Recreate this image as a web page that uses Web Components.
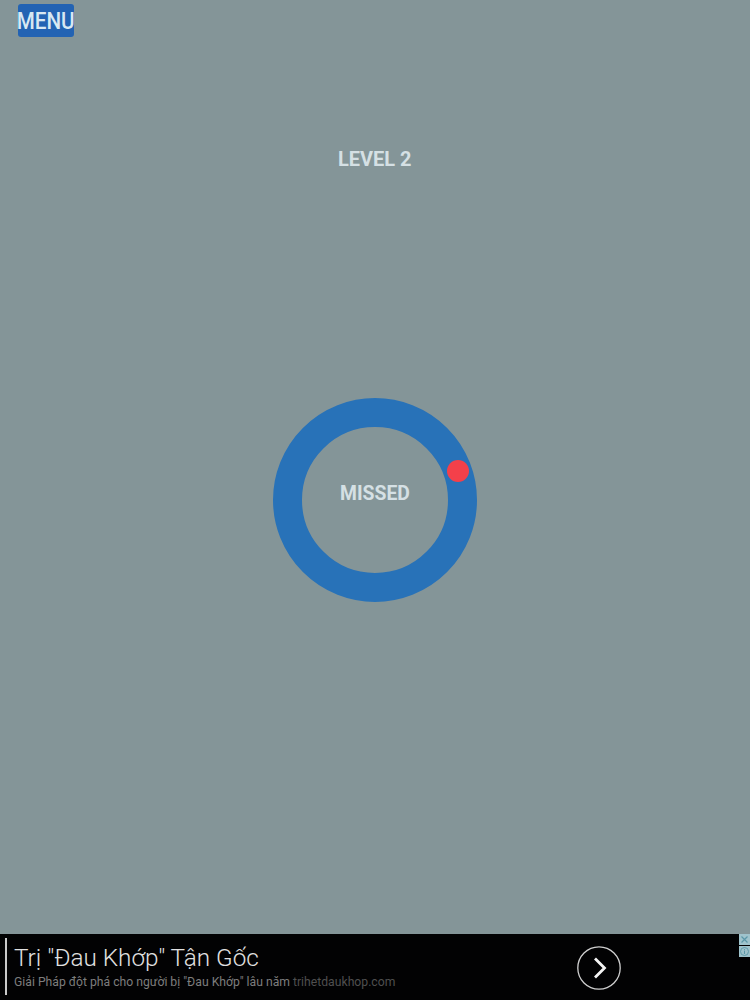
<!DOCTYPE html>
<html>
<head>
<meta charset="utf-8">
<style>
    html, body{ margin:0; padding:0; height:1000px; overflow:hidden; background:#849598; }
    body{ display:flex; flex-direction:column; font-family:Roboto, sans-serif; }
</style>
</head>
<body>
<game-screen level="LEVEL 2" status="MISSED"></game-screen>
<ad-banner
    headline='Trị "Đau Khớp" Tận Gốc'
    sub='Giải Pháp đột phá cho người bị "Đau Khớp" lâu năm'
    site="trihetdaukhop.com"></ad-banner>

<script>
class MenuButton extends HTMLElement{
    constructor(){
        super();
        this.attachShadow({mode:'open'}).innerHTML = `
        <style>
            :host{
                display:flex;
                width:56px;
                height:33px;
                align-items:center;
                justify-content:center;
                background:#2363b3;
                border-radius:3px;
                color:#d8e8f2;
                font:500 24px Roboto, sans-serif;
            }
            span{ display:inline-block; transform:scaleX(.86); }
        </style>
        <span><slot></slot></span>`;
    }
}
customElements.define('menu-button', MenuButton);

class TargetRing extends HTMLElement{
    constructor(){
        super();
        this.attachShadow({mode:'open'}).innerHTML = `
        <style>
            :host{
                display:flex;
                position:relative;
                box-sizing:border-box;
                width:204px;
                height:204px;
                border:29px solid #2872b8;
                border-radius:50%;
                align-items:center;
                justify-content:center;
                color:#d5e0e4;
                font:bold 21px Roboto, sans-serif;
            }
            #ball{
                position:absolute;
                left:145px;
                top:33px;
                width:22px;
                height:22px;
                border-radius:50%;
                background:#f4404a;
            }
            #label{ display:inline-block; margin-top:-15px; transform:scaleX(.92); }
        </style>
        <span id="label"><slot></slot></span>
        <div id="ball"></div>`;
    }
}
customElements.define('target-ring', TargetRing);

class GameScreen extends HTMLElement{
    constructor(){
        super();
        this.attachShadow({mode:'open'}).innerHTML = `
        <style>
            :host{
                display:flex;
                flex-direction:column;
                height:934px;
                box-sizing:border-box;
                padding-top:4px;
                background:#849598;
            }
            menu-button{ margin-left:18px; }
            #level{
                align-self:center;
                margin-top:110px;
                height:24px;
                color:#d5e0e4;
                font:bold 21px/24px Roboto, sans-serif;
                transform:scaleX(.95);
            }
            target-ring{ align-self:center; margin-top:227px; }
        </style>
        <menu-button>MENU</menu-button>
        <div id="level"></div>
        <target-ring></target-ring>`;
    }
    connectedCallback(){
        this.shadowRoot.getElementById('level').textContent = this.getAttribute('level');
        this.shadowRoot.querySelector('target-ring').textContent = this.getAttribute('status');
    }
}
customElements.define('game-screen', GameScreen);

class AdBanner extends HTMLElement{
    constructor(){
        super();
        this.attachShadow({mode:'open'}).innerHTML = `
        <style>
            :host{
                display:flex;
                position:relative;
                height:66px;
                box-sizing:border-box;
                padding:4px 0 5px 5px;
                background:#020203;
                font-family:Roboto, sans-serif;
            }
            #bar{ width:2px; background:#c9c9c9; }
            #copy{
                width:563px;
                margin-left:7px;
                display:flex;
                flex-direction:column;
            }
            #headline{
                font-size:24.3px;
                font-weight:300;
                line-height:32px;
                margin-top:4px;
                color:#e0e0e0;
                white-space:nowrap;
            }
            #sub{
                font-size:12.2px;
                line-height:14px;
                margin-top:1px;
                color:#7d7d7d;
                white-space:nowrap;
            }
            #site{ color:#4f4f4f; }
            #go{ width:44px; height:44px; margin-top:8px; }
            #adchoices{
                position:absolute;
                top:0;
                right:0;
                display:flex;
                flex-direction:column;
                gap:1px;
            }
            #adchoices svg{ display:block; width:11px; height:11px; background:#9fc3cc; }
        </style>
        <div id="bar"></div>
        <div id="copy">
            <div id="headline"></div>
            <div id="sub"><span id="subtext"></span> <span id="site"></span></div>
        </div>
        <svg id="go" viewBox="0 0 44 44" fill="none">
            <circle cx="22" cy="22" r="21.2" stroke="#cfcfcf" stroke-width="1.3"/>
            <path d="M18 12.5 L27.5 22 L18 31.5" stroke="#f4f4f4" stroke-width="2.8"/>
        </svg>
        <div id="adchoices">
            <svg viewBox="0 0 11 11" fill="none"><path d="M2.5 2.5 L8.5 8.5 M8.5 2.5 L2.5 8.5" stroke="#5b97a8" stroke-width="1.2"/></svg>
            <svg viewBox="0 0 11 11" fill="none"><circle cx="5.5" cy="5.5" r="4" stroke="#5b97a8" stroke-width="0.9"/><path d="M5.5 4.6 V8 M5.5 3 V3.9" stroke="#5b97a8" stroke-width="1"/></svg>
        </div>`;
    }
    connectedCallback(){
        let root = this.shadowRoot;
        root.getElementById('headline').textContent = this.getAttribute('headline');
        root.getElementById('subtext').textContent = this.getAttribute('sub');
        root.getElementById('site').textContent = this.getAttribute('site');
    }
}
customElements.define('ad-banner', AdBanner);
</script>
</body>
</html>
